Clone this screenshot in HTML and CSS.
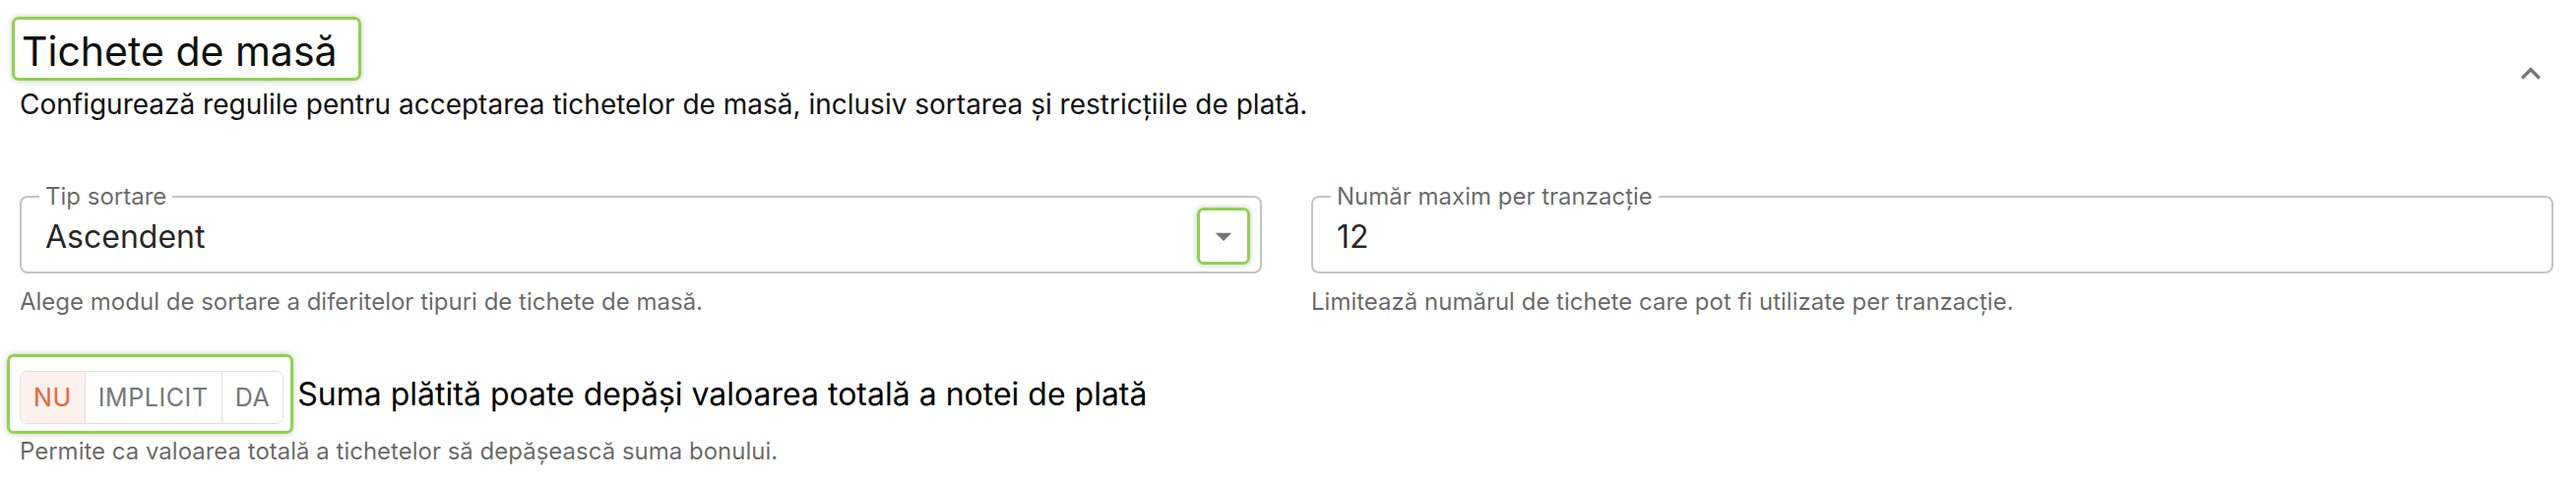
FILE: index.html
```html
<!DOCTYPE html>
<html lang="ro">
<head>
    <meta charset="UTF-8">
    <meta name="viewport" content="width=device-width, initial-scale=1.0">
    <title>Tichete de masă</title>
    <link rel="stylesheet" href="styles.css">
</head>
<body>
    <section class="panel">
        <header class="panel-head">
            <div class="panel-intro">
                <h2 class="panel-title mark">Tichete de masă</h2>
                <p class="panel-desc">Configurează regulile pentru acceptarea tichetelor de masă, inclusiv sortarea și restricțiile de plată.</p>
            </div>
            <button class="collapse-btn" type="button" aria-label="Restrânge">
                <svg viewBox="0 0 24 24"><path d="M12 8l-6 6 1.41 1.41L12 10.83l4.59 4.58L18 14z"/></svg>
            </button>
        </header>

        <div class="fields">
            <div class="field">
                <fieldset class="outlined">
                    <legend>Tip sortare</legend>
                    <div class="control">
                        <span class="value">Ascendent</span>
                        <span class="select-arrow mark">
                            <svg viewBox="0 0 24 24"><path d="M7 10l5 5 5-5z"/></svg>
                        </span>
                    </div>
                </fieldset>
                <p class="helper">Alege modul de sortare a diferitelor tipuri de tichete de masă.</p>
            </div>
            <div class="field">
                <fieldset class="outlined">
                    <legend>Număr maxim per tranzacție</legend>
                    <div class="control">
                        <span class="value">12</span>
                    </div>
                </fieldset>
                <p class="helper">Limitează numărul de tichete care pot fi utilizate per tranzacție.</p>
            </div>
        </div>

        <div class="toggle-row">
            <div class="toggle-wrap mark">
                <div class="toggle-group">
                    <button class="toggle selected" type="button">Nu</button>
                    <button class="toggle" type="button">Implicit</button>
                    <button class="toggle" type="button">Da</button>
                </div>
            </div>
            <span class="toggle-label">Suma plătită poate depăși valoarea totală a notei de plată</span>
        </div>
        <p class="helper helper-tight">Permite ca valoarea totală a tichetelor să depășească suma bonului.</p>
    </section>
</body>
</html>
```

FILE: styles.css
```css
body {
    margin: 0;
    background: #fff;
    color: rgba(0,0,0,0.87);
    font-family: Inter, "Noto Sans", sans-serif;
}
.panel {
    padding: 0 23px 0 20px;
}

.mark {
    border: 3px solid #8fd14f;
    border-radius: 7px;
    box-shadow: 0 0 6px rgba(0,0,0,0.22);
}

.panel-head {
    display: flex;
    justify-content: space-between;
    align-items: flex-start;
    padding-top: 17px;
}
.panel-title {
    display: inline-block;
    margin: 0 0 0 -8px;
    padding: 5px 21px 0 7px;
    font-size: 41px;
    font-weight: 400;
    line-height: 54px;
    color: #111;
}
.panel-desc {
    margin: 4px 0 0;
    font-size: 28px;
    line-height: 40px;
    color: #111;
}
.collapse-btn {
    margin: 38px 3px 0 0;
    padding: 0;
    width: 40px;
    height: 40px;
    border: 0;
    background: none;
    cursor: pointer;
}
.collapse-btn svg {
    display: block;
    width: 40px;
    height: 40px;
    fill: #757575;
}

.fields {
    display: grid;
    grid-template-columns: 1fr 1fr;
    gap: 50px;
    margin-top: 60px;
}
.outlined {
    margin: 0;
    padding: 0 20px 10px 18px;
    border: 2px solid #c4c4c4;
    border-radius: 8px;
}
.outlined legend {
    padding: 0 6px;
    font-size: 24px;
    line-height: 28px;
    color: rgba(0,0,0,0.6);
}
.control {
    display: flex;
    align-items: center;
    justify-content: space-between;
    height: 52px;
}
.value {
    padding-left: 6px;
    font-size: 32px;
    color: rgba(0,0,0,0.87);
}
.select-arrow {
    display: flex;
    margin-right: -10px;
    padding: 6px 4px;
}
.select-arrow svg {
    width: 40px;
    height: 40px;
    fill: rgba(0,0,0,0.54);
}
.helper {
    margin: 15px 0 0;
    font-size: 24px;
    line-height: 28px;
    color: rgba(0,0,0,0.6);
}

.toggle-row {
    display: flex;
    align-items: center;
    gap: 4px;
    margin-top: 39px;
}
.toggle-wrap {
    margin-left: -13px;
    padding: 14px 7px 7px 10px;
}
.toggle-group {
    display: flex;
    border: 1.5px solid #dedede;
    border-radius: 7px;
    overflow: hidden;
}
.toggle {
    height: 52px;
    padding: 0 13px;
    border: 0;
    border-left: 1.5px solid #dedede;
    background: #fff;
    font-family: Inter, "Noto Sans", sans-serif;
    font-size: 25px;
    letter-spacing: 0.6px;
    text-transform: uppercase;
    color: #777;
}
.toggle:first-child {
    border-left: 0;
}
.toggle.selected {
    background: #fdf1ed;
    color: #e8633d;
}
.toggle-label {
    font-size: 32px;
    line-height: 40px;
    color: #000;
}
.helper-tight {
    margin-top: 4px;
}
```
